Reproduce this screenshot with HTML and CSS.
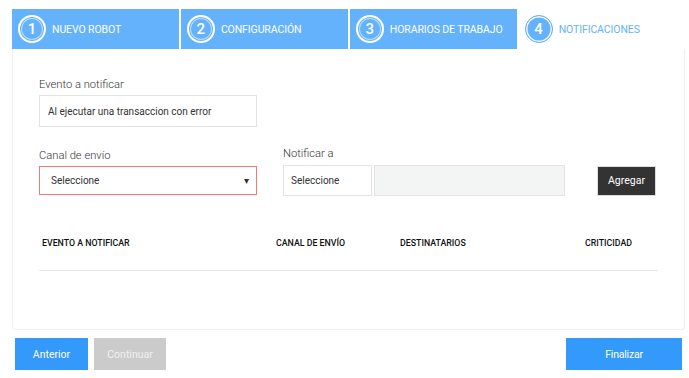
FILE: index.html
```html
<!DOCTYPE html>
<html lang="es">
<head>
<meta charset="utf-8">
<link rel="stylesheet" href="styles.css">
</head>
<body>
<div class="page">
  <div class="steps">
    <div class="step done"><span class="num">1</span><span class="step-label">Nuevo robot</span></div>
    <div class="step done"><span class="num">2</span><span class="step-label">Configuración</span></div>
    <div class="step done"><span class="num">3</span><span class="step-label">Horarios de trabajo</span></div>
    <div class="step active"><span class="num">4</span><span class="step-label">Notificaciones</span></div>
  </div>
  <div class="card">
    <div class="field">
      <label class="label first">Evento a notificar</label>
      <div class="input event">Al ejecutar una transaccion con error</div>
    </div>
    <div class="row">
      <div class="field channel">
        <label class="label low">Canal de envío</label>
        <div class="input select error"><span>Seleccione</span><span class="caret">▾</span></div>
      </div>
      <div class="field notify">
        <label class="label up">Notificar a</label>
        <div class="notify-row">
          <div class="input small">Seleccione</div>
          <div class="input disabled"></div>
          <button class="btn dark">Agregar</button>
        </div>
      </div>
    </div>
    <div class="table-head">
      <span class="col c1">Evento a notificar</span>
      <span class="col c2">Canal de envío</span>
      <span class="col c3">Destinatarios</span>
      <span class="col c4">Criticidad</span>
    </div>
  </div>
  <div class="actions">
    <button class="btn blue prev">Anterior</button>
    <button class="btn grey next">Continuar</button>
    <span class="spacer"></span>
    <button class="btn blue finish">Finalizar</button>
  </div>
</div>
</body>
</html>
```

FILE: styles.css
```css
html, body {
  margin: 0;
  padding: 0;
  background: #fff;
  font-family: Roboto, "Liberation Sans", sans-serif;
  color: #333;
}
.page {
  padding: 9px 3px 0 12px;
}
.steps {
  display: flex;
  gap: 1.5px;
  height: 40px;
}
.step {
  flex: 1;
  display: flex;
  align-items: center;
  padding-left: 6px;
  gap: 6px;
}
.step.done {
  background: #64b2fc;
  color: #fff;
}
.step.active {
  background: #fff;
  color: #64b2fc;
}
.num {
  width: 28px;
  height: 28px;
  box-sizing: border-box;
  border-radius: 50%;
  display: flex;
  align-items: center;
  justify-content: center;
  font-size: 15px;
  font-weight: 500;
}
.done .num {
  border: 2px solid #fff;
  box-shadow: inset 0 0 0 1px #64b2fc, inset 0 0 0 2px rgba(255,255,255,.55);
}
.active .num {
  background: #64b2fc;
  color: #fff;
  border: 1.5px solid #64b2fc;
  box-shadow: inset 0 0 0 1.5px #fff;
}
.step-label {
  text-transform: uppercase;
  font-size: 10.5px;
  letter-spacing: -0.1px;
}
.card {
  margin-right: 1px;
  height: 281px;
  box-sizing: border-box;
  border: 1px solid #eeeeee;
  border-top: none;
  border-radius: 0 0 4px 4px;
  padding: 29px 26px 0 26px;
}
.field {
  display: flex;
  flex-direction: column;
}
.label {
  font-size: 11.2px;
  line-height: 14px;
  color: #333;
  font-weight: 300;
  margin-bottom: 5px;
}
.label.first {
  margin-bottom: 3px;
}
.input {
  box-sizing: border-box;
  border: 1px solid #e3e3e3;
  background: #fff;
  font-size: 10px;
  color: #333;
  display: flex;
  align-items: center;
}
.event {
  width: 218px;
  height: 32px;
  padding-left: 8px;
}
.row {
  display: flex;
  gap: 26px;
  margin-top: 20px;
}
.label.low {
  padding-top: 2px;
  margin-bottom: 3px;
}
.label.up {
  margin-bottom: 4px;
}
.select {
  width: 218px;
  height: 29px;
  padding: 0 7px 0 11px;
  justify-content: space-between;
}
.select.error {
  border-color: #ee7b74;
}
.caret {
  font-size: 10px;
  color: #333;
}
.notify-row {
  display: flex;
  align-items: center;
  gap: 2px;
}
.small {
  width: 89px;
  height: 31px;
  padding-left: 7px;
}
.disabled {
  width: 191px;
  height: 31px;
  background: #f3f4f4;
}
.btn {
  border: none;
  font-family: inherit;
  font-size: 10.5px;
  cursor: pointer;
  padding: 0;
}
.dark {
  background: #333;
  color: #fff;
  width: 59px;
  height: 30px;
  margin-left: 30px;
  border: 1px solid #ddd;
  box-sizing: border-box;
}
.table-head {
  display: flex;
  margin-top: 41px;
  padding: 0 0 21px 3px;
  border-bottom: 1px solid #e6e6e6;
  font-size: 8.8px;
  font-weight: 500;
  text-transform: uppercase;
  color: #111;
  line-height: 12px;
}
.c1 { width: 234px; }
.c2 { width: 124px; }
.c3 { width: 185px; }
.c4 { width: auto; }
.actions {
  display: flex;
  margin-top: 8px;
  padding-left: 3px;
  gap: 6px;
}
.spacer { flex: 1; }
.blue {
  background: #3399fb;
  color: #fff;
}
.grey {
  background: #cbcbcb;
  color: #f1f1f1;
}
.prev, .next {
  width: 73px;
  height: 32px;
}
.next { width: 72px; }
.finish {
  width: 116px;
  height: 32px;
  margin-right: 4px;
  letter-spacing: -0.2px;
}
```
